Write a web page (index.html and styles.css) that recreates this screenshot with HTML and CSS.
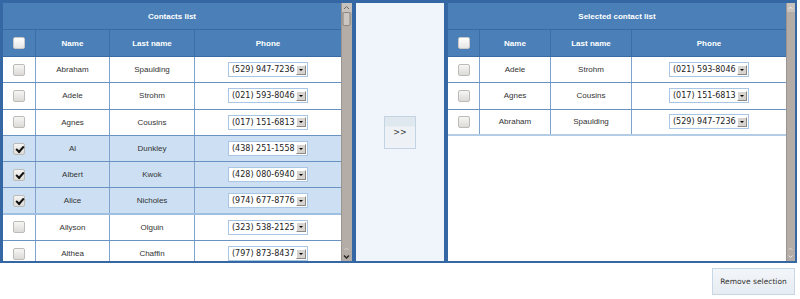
FILE: index.html
```html
<!DOCTYPE html>
<html>
<head>
<meta charset="utf-8">
<link rel="stylesheet" href="styles.css">
</head>
<body>
<div class="app">
  <div class="board">
    <section class="panel left">
      <div class="grid">
        <div class="title">Contacts list</div>
        <div class="row head">
          <div class="cell"><span class="cb"></span></div>
          <div class="cell">Name</div>
          <div class="cell">Last name</div>
          <div class="cell">Phone</div>
        </div>
        <div class="body">
          <div class="row"><div class="cell"><span class="cb"></span></div><div class="cell">Abraham</div><div class="cell">Spaulding</div><div class="cell"><span class="sel"><span class="val">(529) 947-7236</span><span class="dd"></span></span></div></div>
          <div class="row"><div class="cell"><span class="cb"></span></div><div class="cell">Adele</div><div class="cell">Strohm</div><div class="cell"><span class="sel"><span class="val">(021) 593-8046</span><span class="dd"></span></span></div></div>
          <div class="row"><div class="cell"><span class="cb"></span></div><div class="cell">Agnes</div><div class="cell">Cousins</div><div class="cell"><span class="sel"><span class="val">(017) 151-6813</span><span class="dd"></span></span></div></div>
          <div class="row on"><div class="cell"><span class="cb checked"></span></div><div class="cell">Al</div><div class="cell">Dunkley</div><div class="cell"><span class="sel"><span class="val">(438) 251-1558</span><span class="dd"></span></span></div></div>
          <div class="row on"><div class="cell"><span class="cb checked"></span></div><div class="cell">Albert</div><div class="cell">Kwok</div><div class="cell"><span class="sel"><span class="val">(428) 080-6940</span><span class="dd"></span></span></div></div>
          <div class="row on last-on"><div class="cell"><span class="cb checked"></span></div><div class="cell">Alice</div><div class="cell">Nicholes</div><div class="cell"><span class="sel"><span class="val">(974) 677-8776</span><span class="dd"></span></span></div></div>
          <div class="row"><div class="cell"><span class="cb"></span></div><div class="cell">Allyson</div><div class="cell">Olguin</div><div class="cell"><span class="sel"><span class="val">(323) 538-2125</span><span class="dd"></span></span></div></div>
          <div class="row"><div class="cell"><span class="cb"></span></div><div class="cell">Althea</div><div class="cell">Chaffin</div><div class="cell"><span class="sel"><span class="val">(797) 873-8437</span><span class="dd"></span></span></div></div>
        </div>
      </div>
      <div class="scroll">
        <svg width="11" height="258" viewBox="0 0 11 258">
          <rect x="0" y="0" width="11" height="258" fill="#b4ada7"/>
          <rect x="0" y="0" width="1" height="258" fill="#9c958f"/>
          <rect x="1" y="0" width="10" height="9" fill="#c7c2bd"/>
          <path d="M3 6 L5.5 3.5 L8 6" fill="none" stroke="#6f6a66" stroke-width="1"/>
          <rect x="2" y="9.5" width="7" height="13" rx="1.5" fill="#cbc6c1" stroke="#8a847e" stroke-width="1"/>
          <path d="M3.5 247 L5.5 245 L7.5 247" fill="none" stroke="#d6d2ce" stroke-width="1"/>
          <path d="M3 252.5 L5.5 255 L8 252.5" fill="none" stroke="#222" stroke-width="1.4"/>
        </svg>
      </div>
    </section>
    <section class="middle">
      <button class="move">&gt;&gt;</button>
    </section>
    <section class="panel right">
      <div class="grid">
        <div class="title">Selected contact list</div>
        <div class="row head">
          <div class="cell"><span class="cb"></span></div>
          <div class="cell">Name</div>
          <div class="cell">Last name</div>
          <div class="cell">Phone</div>
        </div>
        <div class="body">
          <div class="row"><div class="cell"><span class="cb"></span></div><div class="cell">Adele</div><div class="cell">Strohm</div><div class="cell"><span class="sel"><span class="val">(021) 593-8046</span><span class="dd"></span></span></div></div>
          <div class="row"><div class="cell"><span class="cb"></span></div><div class="cell">Agnes</div><div class="cell">Cousins</div><div class="cell"><span class="sel"><span class="val">(017) 151-6813</span><span class="dd"></span></span></div></div>
          <div class="row end"><div class="cell"><span class="cb"></span></div><div class="cell">Abraham</div><div class="cell">Spaulding</div><div class="cell"><span class="sel"><span class="val">(529) 947-7236</span><span class="dd"></span></span></div></div>
        </div>
      </div>
      <div class="scroll">
        <svg width="9" height="258" viewBox="0 0 9 258">
          <rect x="0" y="0" width="9" height="258" fill="#b4ada7"/>
          <rect x="0" y="0" width="1" height="258" fill="#9c958f"/>
          <rect x="1" y="0" width="8" height="9" fill="#c7c2bd"/>
          <path d="M2.5 6 L4.5 4 L6.5 6" fill="none" stroke="#f0eeec" stroke-width="1"/>
          <path d="M2.5 247 L4.5 245 L6.5 247" fill="none" stroke="#d6d2ce" stroke-width="1"/>
          <path d="M2.5 252.5 L4.5 254.5 L6.5 252.5" fill="none" stroke="#e8e5e2" stroke-width="1"/>
        </svg>
      </div>
    </section>
  </div>
  <div class="actions">
    <button class="remove">Remove selection</button>
  </div>
</div>
</body>
</html>
```

FILE: styles.css
```css
html, body {
  margin: 0;
  padding: 0;
  background: #ffffff;
}

.app {
  width: 800px;
  font-family: "Liberation Sans", Arial, sans-serif;
}

.board {
  display: flex;
  gap: 4px;
  box-sizing: border-box;
  width: 797px;
  height: 263px;
  border: 3px solid #3567a5;
  border-bottom-width: 2px;
  border-right-width: 2px;
  background: #3567a5;
}

.panel {
  display: flex;
  background: #ffffff;
  overflow: hidden;
}

.panel.left {
  width: 349px;
  --cols: 33px 74px 85px 146px;
}

.panel.right {
  width: 347px;
  --cols: 32px 71px 81px 154px;
}

.grid {
  width: 338px;
  flex: none;
  display: flex;
  flex-direction: column;
  overflow: hidden;
}

.scroll {
  flex: 1;
  display: flex;
}

.title {
  box-sizing: border-box;
  height: 27px;
  flex: none;
  background: #4a7fb8;
  border-bottom: 1px solid #386aa3;
  color: #ffffff;
  font-weight: bold;
  font-size: 8px;
  display: flex;
  align-items: center;
  justify-content: center;
}

.row {
  display: grid;
  grid-template-columns: var(--cols);
  box-sizing: border-box;
  height: 26.3px;
  flex: none;
  border-bottom: 1px solid #6a93c4;
  background: #ffffff;
  color: #333333;
  font-size: 8px;
}

.row.head {
  height: 27px;
  background: #4a7fb8;
  border-bottom: 1px solid #386aa3;
  color: #ffffff;
  font-weight: bold;
}

.row.on {
  background: #cde0f3;
}

.row.last-on {
  border-bottom: 2px solid #9fbfe0;
}

.row.end {
  border-bottom: 2px solid #b4cde6;
}

.cell {
  display: flex;
  align-items: center;
  justify-content: center;
  border-right: 1px solid #7fa3cd;
  min-width: 0;
}

.row.head .cell {
  border-right-color: #3b6da6;
}

.cell:last-child {
  border-right: none;
}

.body {
  flex: 1;
  display: flex;
  flex-direction: column;
  overflow: hidden;
}

.cb {
  box-sizing: border-box;
  width: 12px;
  height: 12px;
  border: 1px solid #bdbbb8;
  border-radius: 2px;
  background: linear-gradient(#f6f6f5, #dcdad7);
  position: relative;
}

.row.head .cb {
  background: linear-gradient(#ffffff, #e6e6e6);
  border-color: #c8c8c8;
}

.cb.checked::after {
  content: "";
  position: absolute;
  left: 2px;
  top: 1px;
  width: 6px;
  height: 3px;
  border-left: 2px solid #111111;
  border-bottom: 2px solid #111111;
  transform: rotate(-48deg);
  transform-origin: 50% 50%;
  margin-top: 1px;
}

.sel {
  box-sizing: border-box;
  display: flex;
  align-items: center;
  width: 80px;
  height: 15px;
  border: 1px solid #a9c6e4;
  background: #ffffff;
  padding: 0 1px 0 3px;
}

.val {
  flex: 1;
  font-family: "DejaVu Sans", Verdana, sans-serif;
  font-size: 8px;
  color: #222222;
  white-space: nowrap;
  font-weight: normal;
}

.dd {
  box-sizing: border-box;
  width: 10px;
  height: 10px;
  background: #d7d4cf;
  border: 1px solid #ffffff;
  border-right-color: #8c8883;
  border-bottom-color: #8c8883;
  position: relative;
}

.dd::after {
  content: "";
  position: absolute;
  left: 2px;
  top: 3px;
  border-left: 2px solid transparent;
  border-right: 2px solid transparent;
  border-top: 2px solid #000000;
}

.middle {
  width: 88px;
  background: #eff5fa;
  display: flex;
  align-items: center;
  justify-content: center;
}

.move {
  box-sizing: border-box;
  width: 32px;
  height: 33px;
  border: 1px solid #c3d3e4;
  background: linear-gradient(#dfe7ef 0%, #dfe7ef 30%, #eef2f6 31%, #eef2f6 100%);
  font-family: "DejaVu Sans", Verdana, sans-serif;
  font-size: 8px;
  color: #333333;
  padding: 0;
  margin-top: 1px;
}

.actions {
  display: flex;
  justify-content: flex-end;
  padding: 5px 5px 0 0;
}

.remove {
  box-sizing: border-box;
  width: 83px;
  height: 27px;
  border: 1px solid #c8d7e6;
  background: linear-gradient(#f3f6f9, #e6ecf2);
  font-family: "DejaVu Sans", Verdana, sans-serif;
  font-size: 7.5px;
  color: #333333;
  padding: 0;
}
```
